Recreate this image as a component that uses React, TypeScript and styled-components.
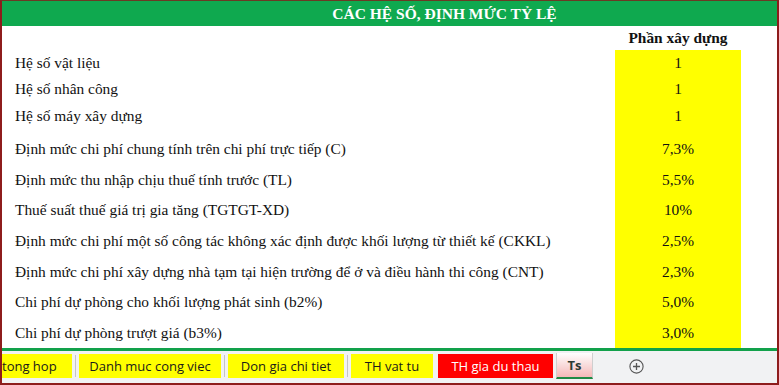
import React from "react";
import styled, { createGlobalStyle } from "styled-components";

const GlobalStyle = createGlobalStyle`
  html, body {
    margin: 0;
    padding: 0;
    background: #ffffff;
  }
  body {
    font-family: "Liberation Serif", "Times New Roman", serif;
  }
`;

const Frame = styled.div`
  width: 779px;
  height: 385px;
  box-sizing: border-box;
  border: 2px solid #8e1c1c;
  border-top: 1px solid #6b3a24;
  display: flex;
  flex-direction: column;
  overflow: hidden;
  background: #ffffff;
`;

const TitleBar = styled.div`
  height: 25px;
  flex: 0 0 25px;
  background: #0fa94f;
  color: #ffffff;
  font-weight: bold;
  font-size: 15.5px;
  display: flex;
  align-items: center;
  justify-content: center;
  padding-left: 110px;
`;

const Sheet = styled.div`
  flex: 1;
  display: grid;
  grid-template-columns: 1fr 126px;
  grid-template-rows: 24px 26px 26px 31.6px repeat(7, 30.67px);
  padding-right: 36px;
  font-size: 15.4px;
  color: #111111;
  align-content: start;
`;

const Label = styled.div<{ $lift?: number }>`
  display: flex;
  align-items: center;
  padding-left: 13px;
  padding-bottom: ${(p) => p.$lift ?? 0}px;
  white-space: nowrap;
`;

const HeadCell = styled.div`
  display: flex;
  align-items: flex-end;
  justify-content: center;
  font-weight: bold;
  padding-bottom: 3px;
`;

const Value = styled.div<{ $lift?: number }>`
  display: flex;
  align-items: center;
  justify-content: center;
  padding-bottom: ${(p) => p.$lift ?? 0}px;
  background: #ffff00;
`;

const Divider = styled.div`
  height: 3px;
  flex: 0 0 3px;
  background: #12a14b;
`;

const TabBar = styled.div`
  flex: 1;
  background: #f1f2f3;
  display: flex;
  align-items: center;
  padding-bottom: 2px;
  font-family: "Open Sans", "Noto Sans", sans-serif;
  font-size: 13px;
`;

const Tab = styled.div<{ $bg: string; $fg: string; $width: number; $clipped?: boolean }>`
  height: 24px;
  width: ${(p) => p.$width}px;
  background: ${(p) => p.$bg};
  color: ${(p) => p.$fg};
  display: flex;
  align-items: center;
  justify-content: ${(p) => (p.$clipped ? "flex-start" : "center")};
  box-sizing: border-box;
  white-space: nowrap;
  margin-left: ${(p) => (p.$bg === "#ff0000" ? 5 : 0)}px;
`;

const Sep = styled.div`
  width: 1px;
  height: 22px;
  margin: 0 3px;
  background: #c4c4c4;
`;

const ActiveTab = styled.div`
  height: 26px;
  width: 37px;
  margin-left: 3px;
  box-sizing: border-box;
  background: linear-gradient(#ffffff, #f4b8b8);
  border-bottom: 2px solid #1e8a45;
  border-left: 1px solid #cfcfcf;
  border-right: 1px solid #cfcfcf;
  color: #2d3a33;
  font-weight: bold;
  display: flex;
  align-items: center;
  justify-content: center;
`;

const AddButton = styled.div`
  margin-left: 36px;
  width: 15px;
  height: 15px;
  display: flex;
  align-items: center;
  justify-content: center;
`;

const rows: [string, string][] = [
  ["Hệ số vật liệu", "1"],
  ["Hệ số nhân công", "1"],
  ["Hệ số máy xây dựng", "1"],
  ["Định mức chi phí chung tính trên chi phí trực tiếp (C)", "7,3%"],
  ["Định mức thu nhập chịu thuế tính trước (TL)", "5,5%"],
  ["Thuế suất thuế giá trị gia tăng (TGTGT-XD)", "10%"],
  [
    "Định mức chi phí một số công tác không xác định được khối lượng từ thiết kế (CKKL)",
    "2,5%",
  ],
  [
    "Định mức chi phí xây dựng nhà tạm tại hiện trường để ở và điều hành thi công (CNT)",
    "2,3%",
  ],
  ["Chi phí dự phòng cho khối lượng phát sinh (b2%)", "5,0%"],
  ["Chi phí dự phòng trượt giá (b3%)", "3,0%"],
];

const tabs = [
  { name: "tong hop", bg: "#ffff00", fg: "#1a1a1a", width: 70, clipped: true },
  { name: "Danh muc cong viec", bg: "#ffff00", fg: "#1a1a1a", width: 142 },
  { name: "Don gia chi tiet", bg: "#ffff00", fg: "#1a1a1a", width: 116 },
  { name: "TH vat tu", bg: "#ffff00", fg: "#1a1a1a", width: 82 },
  { name: "TH gia du thau", bg: "#ff0000", fg: "#ffffff", width: 115 },
];

export default function App() {
  return (
    <>
      <GlobalStyle />
      <Frame>
        <TitleBar>CÁC HỆ SỐ, ĐỊNH MỨC TỶ LỆ</TitleBar>
        <Sheet>
          <Label />
          <HeadCell>Phần xây dựng</HeadCell>
          {rows.map(([label, value], i) => (
            <React.Fragment key={label}>
              <Label $lift={i === 2 ? 4 : 0}>{label}</Label>
              <Value $lift={i === 2 ? 4 : 0}>{value}</Value>
            </React.Fragment>
          ))}
        </Sheet>
        <Divider />
        <TabBar>
          {tabs.map((t, i) => (
            <React.Fragment key={t.name}>
              {i > 0 && t.bg === "#ffff00" && <Sep />}
              <Tab $bg={t.bg} $fg={t.fg} $width={t.width} $clipped={t.clipped}>
                {t.name}
              </Tab>
            </React.Fragment>
          ))}
          <ActiveTab>Ts</ActiveTab>
          <AddButton>
            <svg width="15" height="15" viewBox="0 0 15 15">
              <circle cx="7.5" cy="7.5" r="6.6" fill="none" stroke="#555" strokeWidth="1.1" />
              <path d="M7.5 4v7M4 7.5h7" stroke="#555" strokeWidth="1.3" />
            </svg>
          </AddButton>
        </TabBar>
      </Frame>
    </>
  );
}
